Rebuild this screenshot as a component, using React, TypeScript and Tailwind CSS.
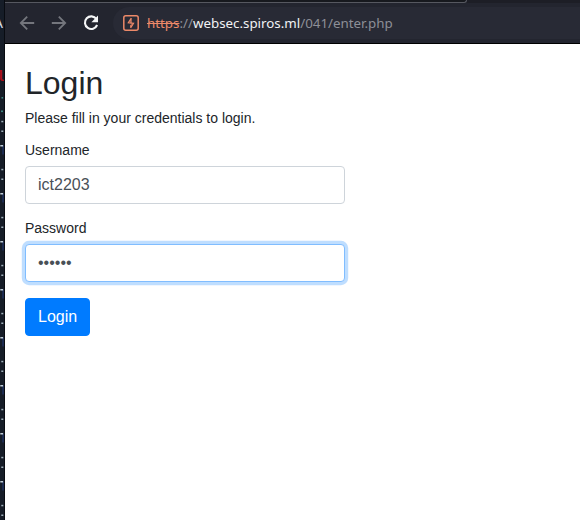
const dashes = Array.from({ length: 9 }, (_, i) => 121 + i * 48);

function TerminalEdge() {
  return (
    <aside className="relative h-[520px] w-[5px] shrink-0 overflow-hidden bg-[#161d28]">
      <span className="absolute -left-[6px] top-[14px] font-['Noto_Sans',sans-serif] text-[14px] leading-[18px] text-[#d3dae3]">A</span>
      <span className="absolute -left-[4px] top-[69px] font-['Liberation_Mono',monospace] text-[15px] font-bold leading-[18px] text-[#a80f19]">l</span>
      <svg className="absolute left-0 top-0" width="5" height="520">
        <rect x="1.5" y="97" width="1.6" height="1.6" fill="#3d8580" />
        <rect x="1" y="110.5" width="2" height="1.6" fill="#3d8580" />
        {dashes.map((y) => (
          <g key={y}>
            <rect x="2" y={y + 24.5} width="2" height="9" fill="#1c2b50" />
            <rect x="1.3" y={y - 0.2} width="2" height="1.5" fill="#9fafb9" />
            <rect x="1.3" y={y + 9.5} width="2" height="1.5" fill="#9fafb9" />
            <rect x="0.3" y={y + 24} width="2.8" height="1.5" fill="#c0ced8" />
          </g>
        ))}
        <rect x="4" width="1" height="520" fill="#080b11" />
      </svg>
    </aside>
  );
}

function Toolbar() {
  return (
    <header className="h-11 border-b border-black bg-[#23252f]">
      <div className="h-[3px] bg-[#1d1e26]">
        <div className="h-[3px] w-[462px] rounded-br-[4px] border-b border-r border-[#565860] bg-[#17191e]" />
      </div>
      <div className="flex h-10 items-start">
        <svg className="mt-[11px] ml-[13px] shrink-0" width="18" height="18" viewBox="0 0 18 18" fill="none" stroke="#74767d" strokeWidth="1.8">
          <path d="M16.2 9H3M9.2 2.6L2.8 9l6.4 6.4" />
        </svg>
        <svg className="mt-[11px] ml-[14px] shrink-0" width="18" height="18" viewBox="0 0 18 18" fill="none" stroke="#74767d" strokeWidth="1.8">
          <path d="M1.8 9H15M8.8 2.6L15.2 9l-6.4 6.4" />
        </svg>
        <svg className="mt-[8px] ml-[11px] shrink-0" width="24" height="24" viewBox="0 0 24 24" fill="none">
          <path d="M17.4 8A6.3 6.3 0 1 0 18.1 14" stroke="#f5f6f7" strokeWidth="2.1" />
          <path d="M19 4.6V11.2H12.4z" fill="#f5f6f7" />
        </svg>
        <div className="ml-[10px] mt-[4px] flex h-8 flex-1 items-center rounded-l-full bg-[#282a35] pl-[10px]">
          <svg className="shrink-0" width="16" height="16" viewBox="0 0 16 16" fill="none" stroke="#ec8969">
            <rect x="0.8" y="0.8" width="14.4" height="14.4" rx="2" strokeWidth="1.5" />
            <path d="M8.3 3.2L5.3 7.8L10.5 8.3L7.6 12.8" strokeWidth="1.2" />
            <path d="M8.6 3V8H7.3V4.6zM7.2 13V10.4L8.6 8.4V11.2z" fill="#ec8969" stroke="none" />
          </svg>
          <div className="ml-2 whitespace-nowrap font-['Noto_Sans',sans-serif] text-[13.33px] leading-5 text-[#8d8f97]">
            <span className="text-[#ec8969] line-through">https</span>
            <span>://</span>
            <span className="text-[#f1f2f4]">websec.spiros.ml</span>
            <span>/041/enter.php</span>
          </div>
        </div>
      </div>
    </header>
  );
}

export default function App() {
  return (
    <div className="flex h-[520px] w-[580px] overflow-hidden bg-white">
      <TerminalEdge />
      <div className="min-w-0 flex-1">
        <Toolbar />
        <main className="w-[360px] px-5 pt-[19.6px] font-['Liberation_Sans',Arial,sans-serif] text-[14px] leading-4 text-[#212529]">
          <h2 className="mb-2 text-[32px] font-normal leading-[38.4px]">Login</h2>
          <p className="mb-4">Please fill in your credentials to login.</p>
          <form onSubmit={(e) => e.preventDefault()}>
            <div className="mb-4">
              <label htmlFor="username" className="mb-2 block">Username</label>
              <input
                id="username"
                type="text"
                defaultValue="ict2203"
                className="block h-[38px] w-full rounded-[4px] border border-[#ced4da] bg-white px-3 py-1.5 text-[16px] leading-6 text-[#495057] outline-none"
              />
            </div>
            <div className="mb-4">
              <label htmlFor="password" className="mb-2 block">Password</label>
              <input
                id="password"
                type="password"
                defaultValue="123456"
                className="block h-[38px] w-full rounded-[4px] border border-[#80bdff] bg-white px-3 py-1.5 text-[16px] leading-6 text-[#495057] shadow-[0_0_0_3.2px_rgba(0,123,255,0.25)] outline-none"
              />
            </div>
            <button type="submit" className="block h-[38px] rounded-[4px] border border-[#007bff] bg-[#007bff] px-3 py-1.5 text-[16px] leading-6 text-white">
              Login
            </button>
          </form>
        </main>
      </div>
    </div>
  );
}
